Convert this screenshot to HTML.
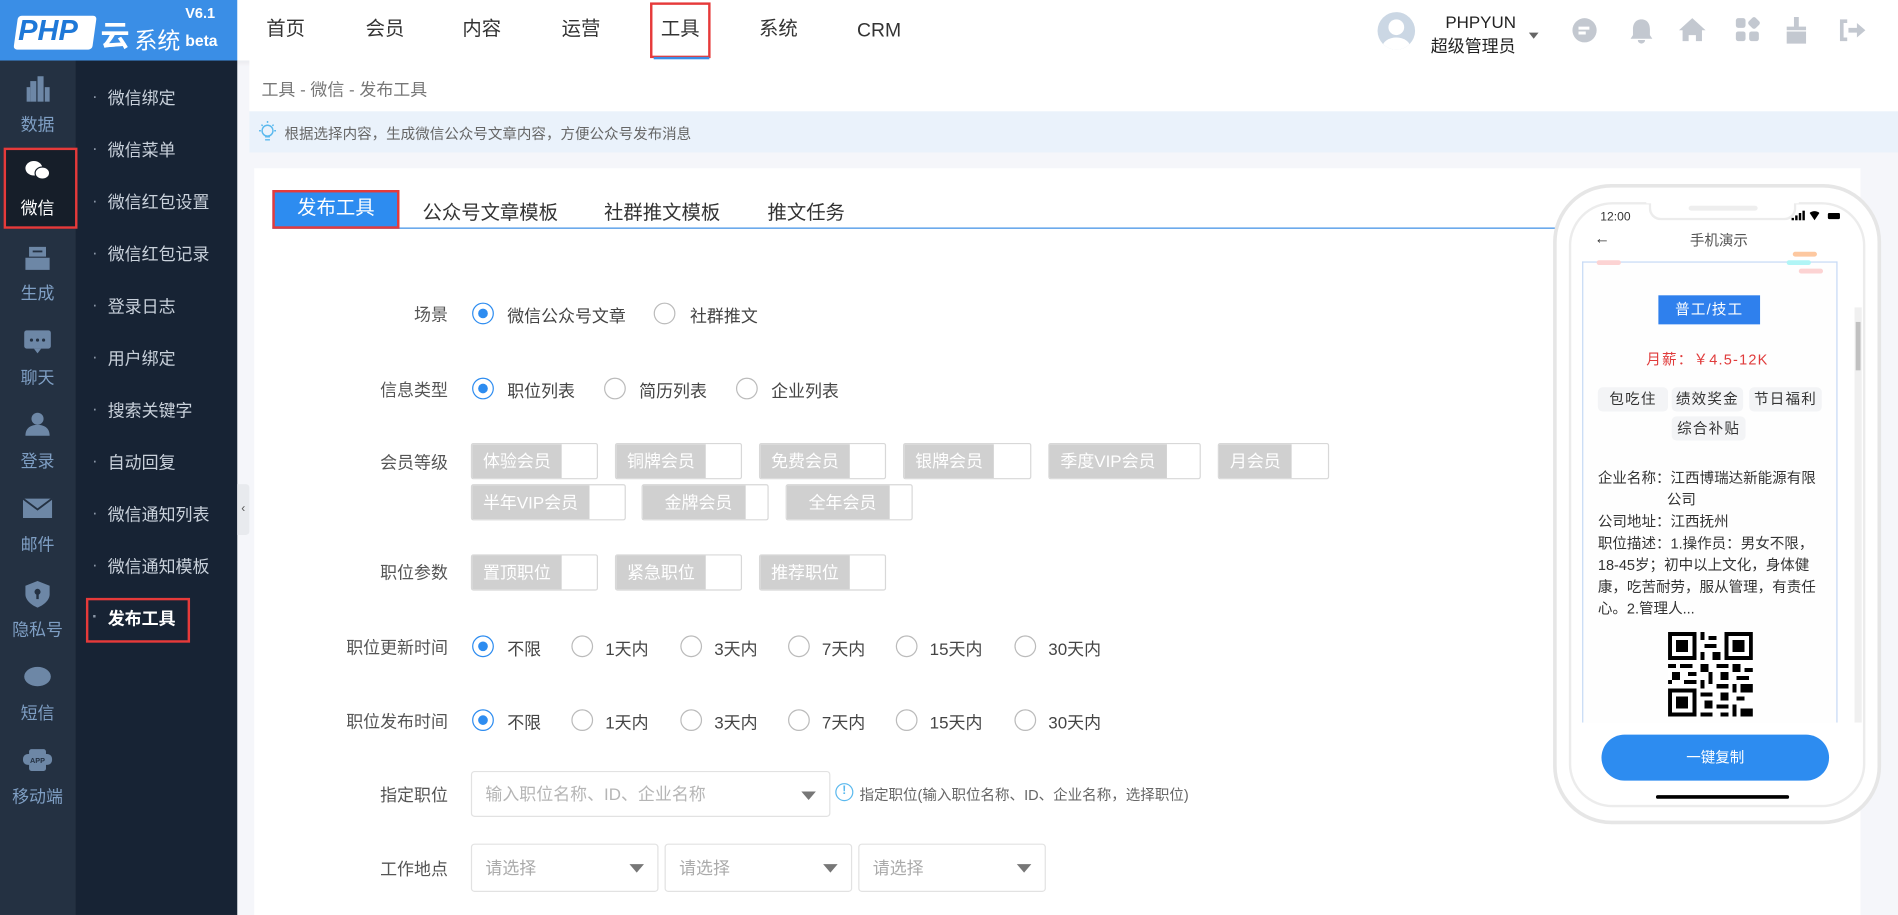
<!DOCTYPE html>
<html><head><meta charset="utf-8"><style>
*{margin:0;padding:0;box-sizing:border-box}
html,body{width:1898px;height:915px;overflow:hidden;background:#f5f6fa}
body{font-family:"Liberation Sans","Noto Sans CJK SC",sans-serif}
#w{position:absolute;left:0;top:0;width:1568px;height:756px;transform:scale(1.2105,1.2103);transform-origin:0 0;background:#f5f6fa}
.a{position:absolute;white-space:nowrap}
.nav{font-size:16px;color:#333;top:13px;height:24px;line-height:24px}
.ic{position:absolute;left:0;width:62px;text-align:center;color:#7f9fc4;font-size:14px}
.sub{position:absolute;left:76px;font-size:14px;color:#c9d1db}
.sub:before{content:"·";position:absolute;left:-13px;color:#8a96a6}
.lbl{position:absolute;width:160px;left:210px;text-align:right;font-size:14px;color:#555}
.r{position:absolute;width:18px;height:18px;border:1px solid #bbb;border-radius:50%;background:#fff}
.r.on{border-color:#2d8cf0}
.r.on:after{content:"";position:absolute;left:4px;top:4px;width:8px;height:8px;border-radius:50%;background:#2d8cf0}
.rt{position:absolute;font-size:14px;color:#444}
.tag{position:absolute;height:30px;border:1px solid #d8d8d8;border-radius:2px;background:#fff;overflow:hidden}
.tag span{display:block;height:100%;background:#d0d0d0;color:#fff;font-size:14px;line-height:28px;padding:0 9px;float:left}
.sel{position:absolute;height:40px;border:1px solid #e2e2e2;border-radius:3px;background:#fff;font-size:14px;color:#aaa;line-height:38px;padding-left:11px}
.sel:after{content:"";position:absolute;right:11px;top:16px;border:6px solid transparent;border-top:7px solid #777;border-bottom:0}
.pt{position:absolute;font-size:12px;color:#333;line-height:18px}
.ptag{position:absolute;background:#f3f4f6;border-radius:4px;font-size:12px;color:#333;height:20px;line-height:20px;text-align:center;letter-spacing:1px}
</style></head><body><div id="w">
<!-- header -->
<div class="a" style="left:0;top:0;width:1568px;height:50px;background:#fff;box-shadow:0 2px 4px rgba(0,0,0,.05)"></div>
<div class="a" style="left:0;top:0;width:196px;height:50px;background:#3a8ee6"></div>
<div class="a" style="left:13px;top:13px;width:65px;height:28px;background:#fff;border-radius:3px;transform:skewX(-8deg)"></div>
<div class="a" style="left:15px;top:12px;font:italic bold 24px 'Liberation Sans';color:#1e78d8">PHP</div>
<div class="a" style="left:83px;top:10px;font-size:24px;color:#fff;font-weight:bold">云</div>
<div class="a" style="left:111px;top:19px;font-size:19px;color:#fff">系统</div>
<div class="a" style="left:153px;top:4px;font-size:12px;color:#fff;font-weight:bold">V6.1</div>
<div class="a" style="left:153px;top:26px;font-size:13px;color:#fff;font-weight:bold">beta</div>
<div class="a nav" style="left:220px">首页</div>
<div class="a nav" style="left:302px">会员</div>
<div class="a nav" style="left:382px">内容</div>
<div class="a nav" style="left:464px">运营</div>
<div class="a nav" style="left:546px">工具</div>
<div class="a" style="left:537px;top:2px;width:50px;height:46px;border:2px solid #e63a3a"></div>
<div class="a" style="left:540px;top:47px;width:46px;height:2px;background:#3a8ee6"></div>
<div class="a nav" style="left:627px">系统</div>
<div class="a nav" style="left:708px;top:14px">CRM</div>
<div class="a" style="left:1138px;top:10px;width:31px;height:31px;border-radius:50%;background:#cbd7e4;overflow:hidden"><div style="position:absolute;left:9px;top:6px;width:13px;height:13px;border-radius:50%;background:#fff"></div><div style="position:absolute;left:4px;top:21px;width:23px;height:16px;border-radius:50%;background:#fff"></div></div>
<div class="a" style="left:1194px;top:10px;font-size:14px;color:#222">PHPYUN</div>
<div class="a" style="left:1182px;top:28px;font-size:14px;color:#222">超级管理员</div>
<div class="a" style="left:1263px;top:27px;border:4px solid transparent;border-top:5px solid #666"></div>
<svg class="a" style="left:1298px;top:14px" width="245" height="24" fill="#c3c8d0">
<circle cx="11" cy="11" r="10"/><rect x="6" y="8" width="9" height="2.5" fill="#fff"/><rect x="6" y="12" width="6" height="2.5" fill="#fff"/>
<path d="M58 2c-5 0-7 4-7 8v5l-2 3h18l-2-3v-5c0-4-2-8-7-8zM55 19a3 3 0 006 0z"/>
<path d="M100 1l-11 10h3v9h5v-5h6v5h5v-9h3z"/>
<rect x="136" y="1" width="8" height="8" rx="2"/><rect x="147" y="1" width="8" height="8" rx="2" transform="rotate(45 151 5)"/><rect x="136" y="12" width="8" height="8" rx="2"/><rect x="147" y="12" width="8" height="8" rx="2"/>
<path d="M184 0h4v8h6v3h-16v-3h6zM178 12h16v10h-16z"/>
<path d="M222 2h6v3h-3v12h3v3h-6zM229 9h7v-4l7 6-7 6v-4h-7z"/>
</svg>
<!-- sidebar -->
<div class="a" style="left:0;top:50px;width:62px;height:706px;background:#243142"></div>
<div class="a" style="left:62px;top:50px;width:134px;height:706px;background:#172334"></div>
<div class="a" style="left:3px;top:122px;width:61px;height:67px;background:#161e29;border:2px solid #e63a3a"></div>
<svg class="a" style="left:0;top:62px" width="62" height="600" fill="#6d87a6">
<rect x="25" y="5" width="5" height="17"/><rect x="31" y="1" width="5" height="21"/><rect x="37" y="10" width="4" height="12"/><rect x="22" y="10" width="3" height="12"/>
<g fill="#fff"><ellipse cx="28" cy="77" rx="7" ry="6"/><ellipse cx="35" cy="81" rx="6" ry="5" stroke="#161e29" stroke-width="1"/></g>
<path d="M24 142h14v8h-14zM21 151h20v10h-20z"/><rect x="27" y="145" width="8" height="1.5" fill="#243142"/>
<rect x="20" y="211" width="22" height="15" rx="2"/><path d="M28 226l3 4 3-4z"/><circle cx="26" cy="219" r="1.3" fill="#243142"/><circle cx="31" cy="219" r="1.3" fill="#243142"/><circle cx="36" cy="219" r="1.3" fill="#243142"/>
<circle cx="31" cy="284" r="5"/><path d="M21 298c0-7 5-9 10-9s10 2 10 9z"/>
<path d="M19 350h24v16h-24z"/><path d="M19 350l12 9 12-9" stroke="#243142" stroke-width="1.5" fill="none"/>
<path d="M31 418l10 4v7c0 5-5 9-10 11-5-2-10-6-10-11v-7z"/><circle cx="31" cy="427" r="2.5" fill="#243142"/><rect x="30" y="428" width="2" height="5" fill="#243142"/>
<ellipse cx="31" cy="497" rx="11" ry="8"/>
<rect x="24" y="557" width="14" height="18" rx="2"/><rect x="19" y="561" width="24" height="9" rx="4"/><text x="31" y="568.5" font-size="6" fill="#243142" text-anchor="middle" font-family="Liberation Sans" font-weight="bold">APP</text>
</svg>
<div class="ic" style="top:93px">数据</div>
<div class="ic" style="top:162px;color:#fff">微信</div>
<div class="ic" style="top:232px">生成</div>
<div class="ic" style="top:302px">聊天</div>
<div class="ic" style="top:371px">登录</div>
<div class="ic" style="top:440px">邮件</div>
<div class="ic" style="top:510px">隐私号</div>
<div class="ic" style="top:579px">短信</div>
<div class="ic" style="top:648px">移动端</div>
<div class="sub" style="left:89px;top:71px">微信绑定</div>
<div class="sub" style="left:89px;top:114px">微信菜单</div>
<div class="sub" style="left:89px;top:157px">微信红包设置</div>
<div class="sub" style="left:89px;top:200px">微信红包记录</div>
<div class="sub" style="left:89px;top:243px">登录日志</div>
<div class="sub" style="left:89px;top:286px">用户绑定</div>
<div class="sub" style="left:89px;top:329px">搜索关键字</div>
<div class="sub" style="left:89px;top:372px">自动回复</div>
<div class="sub" style="left:89px;top:415px">微信通知列表</div>
<div class="sub" style="left:89px;top:458px">微信通知模板</div>
<div class="sub" style="left:89px;top:501px;color:#fff;font-weight:bold">发布工具</div>
<div class="a" style="left:71px;top:494px;width:86px;height:37px;border:2px solid #e63a3a"></div>
<div class="a" style="left:196px;top:400px;width:10px;height:42px;background:#e8eaee;border-radius:0 3px 3px 0;font-size:10px;color:#555;line-height:42px;text-align:center">‹</div>
<!-- breadcrumbs -->
<div class="a" style="left:206px;top:50px;width:1362px;height:42px;background:#fff"></div>
<div class="a" style="left:216px;top:64px;font-size:14px;color:#777">工具 - 微信 - 发布工具</div>
<div class="a" style="left:206px;top:92px;width:1362px;height:34px;background:#eaf2fb"></div>
<svg class="a" style="left:211px;top:99px" width="20" height="20" fill="none" stroke="#5bb9ee" stroke-width="1.2"><circle cx="10" cy="9" r="4.5"/><path d="M8 14h4M8 16.5h4M10 1v1.5M3 9h1.5M15.5 9h1.5M5 4l1 1M15 4l-1 1"/></svg>
<div class="a" style="left:235px;top:102px;font-size:12px;color:#666">根据选择内容，生成微信公众号文章内容，方便公众号发布消息</div>
<!-- card -->
<div class="a" style="left:210px;top:139px;width:1327px;height:617px;background:#fff"></div>
<div class="a" style="left:225px;top:188px;width:1060px;height:1px;background:#3a8ee6"></div>
<div class="a" style="left:225px;top:157px;width:105px;height:32px;background:#2d8cf0;border:2px solid #e63a3a;color:#fff;font-size:16px;text-align:center;line-height:28px">发布工具</div>
<div class="a" style="left:349px;top:162px;font-size:16px;color:#333">公众号文章模板</div>
<div class="a" style="left:499px;top:162px;font-size:16px;color:#333">社群推文模板</div>
<div class="a" style="left:634px;top:162px;font-size:16px;color:#333">推文任务</div>
<!-- form -->
<div class="lbl" style="top:250px">场景</div>
<div class="r on" style="left:390px;top:250px"></div><div class="rt" style="left:419px;top:251px">微信公众号文章</div>
<div class="r" style="left:540px;top:250px"></div><div class="rt" style="left:570px;top:251px">社群推文</div>
<div class="lbl" style="top:312px">信息类型</div>
<div class="r on" style="left:390px;top:312px"></div><div class="rt" style="left:419px;top:313px">职位列表</div>
<div class="r" style="left:499px;top:312px"></div><div class="rt" style="left:528px;top:313px">简历列表</div>
<div class="r" style="left:608px;top:312px"></div><div class="rt" style="left:637px;top:313px">企业列表</div>
<div class="lbl" style="top:372px">会员等级</div>
<div class="tag" style="left:389px;top:366px;width:105px"><span>体验会员</span></div>
<div class="tag" style="left:508px;top:366px;width:105px"><span>铜牌会员</span></div>
<div class="tag" style="left:627px;top:366px;width:105px"><span>免费会员</span></div>
<div class="tag" style="left:746px;top:366px;width:106px"><span>银牌会员</span></div>
<div class="tag" style="left:866px;top:366px;width:126px"><span>季度VIP会员</span></div>
<div class="tag" style="left:1006px;top:366px;width:92px"><span>月会员</span></div>
<div class="tag" style="left:389px;top:400px;width:128px"><span>半年VIP会员</span></div>
<div class="tag" style="left:530px;top:400px;width:105px"><span style="padding:0 11px 0 18px">金牌会员</span></div>
<div class="tag" style="left:649px;top:400px;width:105px"><span style="padding:0 11px 0 18px">全年会员</span></div>
<div class="lbl" style="top:463px">职位参数</div>
<div class="tag" style="left:389px;top:458px;width:105px"><span>置顶职位</span></div>
<div class="tag" style="left:508px;top:458px;width:105px"><span>紧急职位</span></div>
<div class="tag" style="left:627px;top:458px;width:105px"><span>推荐职位</span></div>
<div class="lbl" style="top:525px">职位更新时间</div>
<div class="r on" style="left:390px;top:525px"></div><div class="rt" style="left:419px;top:526px">不限</div>
<div class="r" style="left:472px;top:525px"></div><div class="rt" style="left:500px;top:526px">1天内</div>
<div class="r" style="left:562px;top:525px"></div><div class="rt" style="left:590px;top:526px">3天内</div>
<div class="r" style="left:651px;top:525px"></div><div class="rt" style="left:679px;top:526px">7天内</div>
<div class="r" style="left:740px;top:525px"></div><div class="rt" style="left:768px;top:526px">15天内</div>
<div class="r" style="left:838px;top:525px"></div><div class="rt" style="left:866px;top:526px">30天内</div>
<div class="lbl" style="top:586px">职位发布时间</div>
<div class="r on" style="left:390px;top:586px"></div><div class="rt" style="left:419px;top:587px">不限</div>
<div class="r" style="left:472px;top:586px"></div><div class="rt" style="left:500px;top:587px">1天内</div>
<div class="r" style="left:562px;top:586px"></div><div class="rt" style="left:590px;top:587px">3天内</div>
<div class="r" style="left:651px;top:586px"></div><div class="rt" style="left:679px;top:587px">7天内</div>
<div class="r" style="left:740px;top:586px"></div><div class="rt" style="left:768px;top:587px">15天内</div>
<div class="r" style="left:838px;top:586px"></div><div class="rt" style="left:866px;top:587px">30天内</div>
<div class="lbl" style="top:647px">指定职位</div>
<div class="sel" style="left:389px;top:637px;width:297px;height:38px;line-height:36px;color:#b5b5b5">输入职位名称、ID、企业名称</div>
<div class="a" style="left:690px;top:647px;width:15px;height:15px;border:1.5px solid #5bb9ee;border-radius:50%;font-size:10px;color:#5bb9ee;text-align:center;line-height:12px;font-weight:bold">!</div>
<div class="a" style="left:710px;top:648px;font-size:12px;color:#666">指定职位(输入职位名称、ID、企业名称，选择职位)</div>
<div class="lbl" style="top:708px">工作地点</div>
<div class="sel" style="left:389px;top:697px;width:155px">请选择</div>
<div class="sel" style="left:549px;top:697px;width:155px">请选择</div>
<div class="sel" style="left:709px;top:697px;width:155px">请选择</div>
<!-- phone -->
<div class="a" style="left:1283px;top:152px;width:271px;height:529px;border:3px solid #e6e6e6;border-radius:48px;background:#fff"></div>
<div class="a" style="left:1296px;top:167px;width:245px;height:500px;border:2px solid #ececec;border-radius:36px;background:#fff"></div>
<div class="a" style="left:1362px;top:162px;width:122px;height:20px;background:#fff;border:2px solid #ececec;border-top:0;border-radius:0 0 10px 10px"></div>
<div class="a" style="left:1360px;top:160px;width:126px;height:8px;background:#fff"></div>
<div class="a" style="left:1395px;top:170px;width:57px;height:4px;background:#eee;border-radius:2px"></div>
<div class="a" style="left:1322px;top:174px;font-size:10px;color:#333">12:00</div>
<svg class="a" style="left:1480px;top:174px" width="45" height="10" fill="#000"><rect x="0" y="6" width="2" height="2"/><rect x="3" y="4" width="2" height="4"/><rect x="6" y="2" width="2" height="6"/><rect x="9" y="0" width="2" height="8"/><path d="M15 2a6 6 0 018 0l-4 6z"/><rect x="30" y="2" width="10" height="5" rx="1"/></svg>
<div class="a" style="left:1317px;top:189px;font-size:13px;color:#333">←</div>
<div class="a" style="left:1396px;top:190px;font-size:12px;color:#555">手机演示</div>
<div class="a" style="left:1307px;top:216px;width:211px;height:381px;border:1px solid #c5d9f5;border-bottom:0;background:#fefefe"></div>
<div class="a" style="left:1319px;top:215px;width:20px;height:4px;background:#fcd3d3;border-radius:2px"></div>
<div class="a" style="left:1481px;top:208px;width:20px;height:4px;background:#fdc8a0;border-radius:2px"></div>
<div class="a" style="left:1476px;top:215px;width:20px;height:4px;background:#b0f5f6;border-radius:2px"></div>
<div class="a" style="left:1486px;top:222px;width:20px;height:4px;background:#fcd3d3;border-radius:2px"></div>
<div class="a" style="left:1532px;top:254px;width:6px;height:343px;background:#f0f0f0"></div>
<div class="a" style="left:1533px;top:266px;width:4px;height:40px;background:#c1c1c1"></div>
<div class="a" style="left:1370px;top:244px;width:84px;height:24px;background:#2f80ed;color:#fff;font-size:12px;text-align:center;line-height:24px;letter-spacing:1px">普工/技工</div>
<div class="a" style="left:1360px;top:288px;font-size:12px;color:#e03c3c;letter-spacing:1px">月薪：￥4.5-12K</div>
<div class="ptag" style="left:1320px;top:320px;width:58px">包吃住</div>
<div class="ptag" style="left:1381px;top:320px;width:59px">绩效奖金</div>
<div class="ptag" style="left:1445px;top:320px;width:60px">节日福利</div>
<div class="ptag" style="left:1381px;top:344px;width:61px">综合补贴</div>
<div class="pt" style="left:1320px;top:386px">企业名称：江西博瑞达新能源有限</div>
<div class="pt" style="left:1377px;top:404px">公司</div>
<div class="pt" style="left:1320px;top:422px">公司地址：江西抚州</div>
<div class="pt" style="left:1320px;top:440px;width:190px;white-space:normal">职位描述：1.操作员：男女不限，18-45岁；初中以上文化，身体健康，吃苦耐劳，服从管理，有责任心。2.管理人...</div>
<svg class="a" style="left:1378px;top:522px" width="70" height="70" viewBox="0 0 21 21" shape-rendering="crispEdges">
<rect width="21" height="21" fill="#fff"/>
<g fill="#000"><path d="M0 0h7v7h-7zM14 0h7v7h-7zM0 14h7v7h-7z"/></g>
<g fill="#fff"><path d="M1 1h5v5h-5zM15 1h5v5h-5zM1 15h5v5h-5z"/></g>
<g fill="#000"><path d="M2 2h3v3h-3zM16 2h3v3h-3zM2 16h3v3h-3z"/>
<path d="M8 0h1v2h-1zM10 1h2v1h-2zM9 3h3v1h-3zM8 5h1v2h-1zM11 5h2v2h-2zM0 8h2v1h-2zM3 8h3v1h-3zM8 8h2v2h-2zM12 8h3v1h-3zM16 8h2v2h-2zM19 9h2v1h-2zM1 10h2v2h-2zM5 10h2v1h-2zM10 10h1v3h-1zM13 10h2v2h-2zM17 11h3v1h-3zM0 12h1v1h-1zM4 12h3v1h-3zM8 12h1v2h-1zM12 13h3v1h-3zM16 13h1v2h-1zM18 13h3v2h-3zM8 15h3v1h-3zM13 15h2v2h-2zM17 16h2v1h-2zM9 17h2v2h-2zM12 18h3v1h-3zM16 18h1v3h-1zM18 19h3v2h-3zM8 20h3v1h-3zM13 20h2v1h-2z"/></g>
</svg>
<div class="a" style="left:1323px;top:607px;width:188px;height:38px;border-radius:19px;background:#2d8cf0;color:#fff;font-size:12px;text-align:center;line-height:38px">一键复制</div>
<div class="a" style="left:1368px;top:657px;width:110px;height:3px;background:#000;border-radius:2px"></div>
</div></body></html>
